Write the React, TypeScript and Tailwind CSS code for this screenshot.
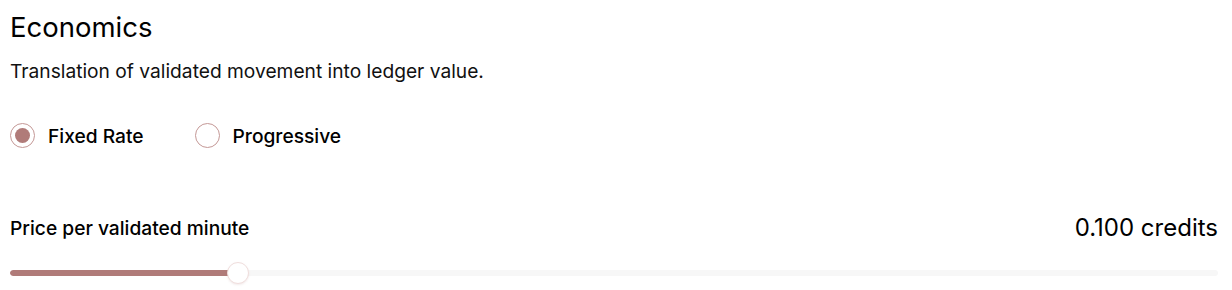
import { useState } from 'react';

export default function App() {
    const [mode, setMode] = useState<'fixed' | 'progressive'>('fixed');
    const value = 0.1;
    const pct = 18.9; // thumb position along the track

    return (
        <div className="w-[1232px] h-[290px] bg-white pl-[10px] pr-[14px] pt-[9px] font-['Inter',sans-serif] text-black">
            {/* Header */}
            <h2 className="text-[27.5px] leading-[36px] font-normal">Economics</h2>
            <p className="mt-[14px] text-[19.2px] leading-[24px] text-[#111]">
                Translation of validated movement into ledger value.
            </p>

            {/* Mode radios */}
            <div className="mt-[40px] flex items-center gap-[51px]">
                <Radio label="Fixed Rate" checked={mode === 'fixed'} onClick={() => setMode('fixed')} />
                <Radio label="Progressive" checked={mode === 'progressive'} onClick={() => setMode('progressive')} />
            </div>

            {/* Price slider */}
            <div className="mt-[66px] flex items-center justify-between h-[28px]">
                <span className="text-[19.2px] leading-[28px] font-medium">Price per validated minute</span>
                <span className="text-[24px] leading-[28px]">{value.toFixed(3)} credits</span>
            </div>
            <div className="relative mt-[20px] h-[22px] flex items-center">
                <div className="w-full h-[6px] rounded-full bg-[#f7f7f7] overflow-hidden">
                    <div className="h-full bg-[#b07b79] rounded-full" style={{ width: `${pct}%` }} />
                </div>
                <div
                    className="absolute top-0 w-[22px] h-[22px] rounded-full bg-white border border-[#f0dedd] shadow-[0_1px_2px_rgba(176,123,121,0.15)]"
                    style={{ left: `calc(${pct}% - 11px)` }}
                />
            </div>
        </div>
    );
}

function Radio({ label, checked, onClick }: { label: string; checked: boolean; onClick: () => void }) {
    return (
        <button type="button" onClick={onClick} className="flex items-center gap-[13px]">
            <span className="w-[25px] h-[25px] rounded-full border border-[#c49896] flex items-center justify-center">
                {checked && <span className="w-[15px] h-[15px] rounded-full bg-[#b07b79]" />}
            </span>
            <span className="text-[19.2px] leading-[24px] font-medium">{label}</span>
        </button>
    );
}
